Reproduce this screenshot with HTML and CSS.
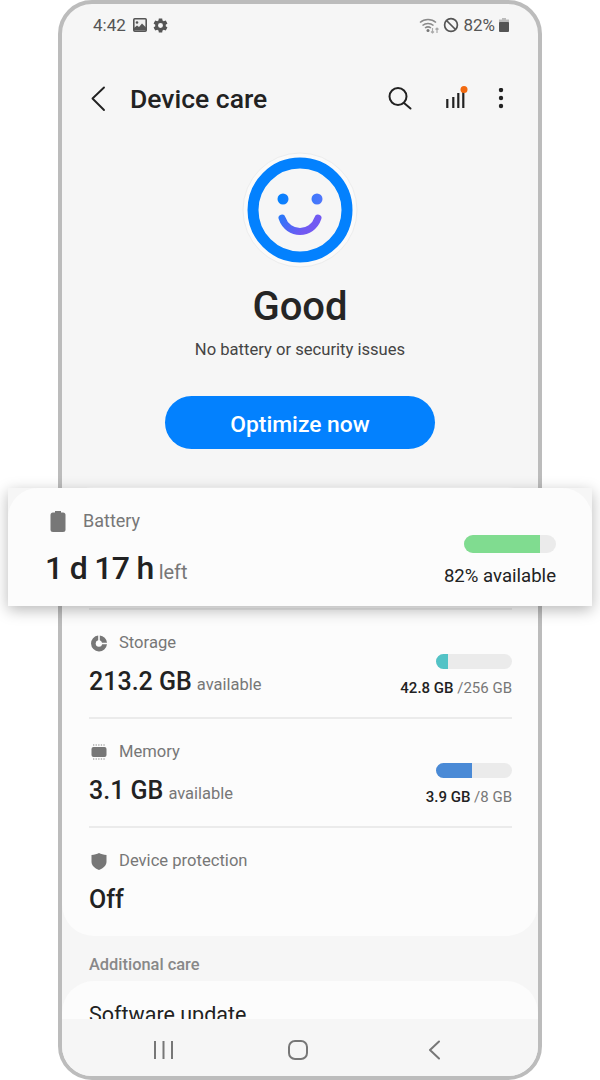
FILE: index.html
```html
<!DOCTYPE html>
<html lang="en">
<head>
  <meta charset="UTF-8">
  <meta name="viewport" content="width=device-width, initial-scale=1.0">
  <title>Device care</title>
  <link rel="stylesheet" href="styles.css">
</head>
<body>
  <div class="page">
    <div class="phone">
      <!-- Status bar -->
      <div class="status-bar">
        <div class="status-left">
          <span class="status-time">4:42</span>
          <svg width="14" height="14" viewBox="0 0 14 14"><rect x="0.800" y="0.800" width="12.400" height="12.400" rx="1" fill="#eee" stroke="#555" stroke-width="1.600"/><circle cx="4" cy="4.500" r="1.300" fill="#555"/><path fill="#555" d="M1 12.500V10l3-2.500 2 1.500 3-3.500 4 4v3z"/></svg>
          <svg width="17" height="17" viewBox="0 0 24 24"><path fill="#555" d="M19.400 13a7.600 7.600 0 0 0 0-2l2.400-1.900-2.400-4.200-2.900 1.200a7.500 7.500 0 0 0-1.700-1L14.400 2H9.600l-.4 3.100a7.500 7.500 0 0 0-1.700 1L4.600 4.900 2.200 9.100 4.600 11a7.600 7.600 0 0 0 0 2l-2.400 1.900 2.400 4.200 2.900-1.200a7.500 7.500 0 0 0 1.700 1l.4 3.100h4.800l.4-3.100a7.500 7.500 0 0 0 1.700-1l2.900 1.200 2.400-4.200zM12 15.500a3.500 3.500 0 1 1 0-7 3.500 3.500 0 0 1 0 7z"/></svg>
        </div>
        <div class="status-right">
          <svg width="21" height="18" viewBox="0 0 21 18"><g fill="none" stroke="#8a8a8a" stroke-width="1.500"><path d="M1 6.500a12 12 0 0 1 16 0"/><path d="M3.500 9.500a8.500 8.500 0 0 1 11 0"/><path d="M6 12a5 5 0 0 1 6 0"/></g><circle cx="9" cy="14.500" r="1.500" fill="#777"/><path stroke="#aaa" stroke-width="1.200" fill="none" d="M13.500 12v5M12 15.500l1.500 1.500 1.500-1.500M18 17v-5M16.500 13.500l1.500-1.500 1.500 1.500"/></svg>
          <svg width="16" height="16" viewBox="0 0 16 16"><g fill="none" stroke="#555" stroke-width="1.700"><circle cx="8" cy="8" r="6.400"/><path d="M3.500 3.500l9 9"/></g></svg>
          <span class="status-pct">82%</span>
          <svg width="10" height="14" viewBox="0 0 10 14"><path fill="#bbb" d="M3 0h4v2H3z"/><path fill="#bbb" d="M0 1.500h10V5H0z"/><rect y="4" x="0" width="10" height="10" rx="1" fill="#555"/></svg>
        </div>
      </div>

      <!-- App bar -->
      <div class="app-bar">
        <svg class="app-back" width="16" height="26" viewBox="0 0 16 26"><path fill="none" stroke="#222" stroke-width="1.900" stroke-linecap="round" stroke-linejoin="round" d="M14 1.500L2.500 12.500 14 24"/></svg>
        <h1 class="app-title">Device care</h1>
        <svg class="app-search" width="24" height="24" viewBox="0 0 24 24"><g fill="none" stroke="#222" stroke-width="2" stroke-linecap="round"><circle cx="10" cy="9.500" r="8.500"/><path d="M16 16l6.500 5.500"/></g></svg>
        <svg class="app-signal" width="23" height="26" viewBox="0 0 23 26"><g stroke="#222" stroke-width="2.200"><path d="M2.300 22v-9M8.300 22V11M13.300 22V7M18.300 22V6"/></g><circle cx="19" cy="3.500" r="3.500" fill="#f26a10"/></svg>
        <svg class="app-more" width="6" height="22" viewBox="0 0 6 22"><g fill="#222"><circle cx="3" cy="2" r="2.200"/><circle cx="3" cy="10" r="2.200"/><circle cx="3" cy="18" r="2.200"/></g></svg>
      </div>

      <!-- Scrolling content -->
      <div class="content">
        <div class="hero">
          <svg width="116" height="116" viewBox="0 0 116 116">
            <defs>
              <linearGradient id="smile" gradientUnits="userSpaceOnUse" x1="38" y1="48" x2="78" y2="86">
                <stop offset="0" stop-color="#0a84fc"/>
                <stop offset="0.7" stop-color="#7259f2"/>
              </linearGradient>
              <linearGradient id="eyes" gradientUnits="userSpaceOnUse" x1="36" y1="47" x2="80" y2="47">
                <stop offset="0" stop-color="#0381fe"/>
                <stop offset="1" stop-color="#4f76fb"/>
              </linearGradient>
            </defs>
            <circle cx="58" cy="58" r="57" fill="#fafafa" stroke="#ececec"/>
            <circle cx="58" cy="58" r="47" fill="#f6f6f6" stroke="#0381fe" stroke-width="11"/>
            <circle cx="41" cy="47" r="5.500" fill="url(#eyes)"/>
            <circle cx="75" cy="47" r="5.500" fill="url(#eyes)"/>
            <path fill="none" stroke="url(#smile)" stroke-width="7" stroke-linecap="round" d="M40 66c3 9 10.500 13.500 18 13.500S73 75 76 66"/>
          </svg>
          <div class="hero-title">Good</div>
          <div class="hero-sub">No battery or security issues</div>
          <button class="optimize-btn">Optimize now</button>
        </div>

        <div class="care-card">
          <!-- Storage -->
          <div class="care-row">
            <div class="care-left">
              <div class="care-label">
                <span class="care-icon"><svg width="17" height="17" viewBox="0 0 17 17"><path fill="#777" d="M7.200.5A8 8 0 1 0 16 9.300h-4.800a3.300 3.300 0 1 1-4-4z"/><path fill="#777" d="M8.800.5A8 8 0 0 1 16 7.700h-5a3.300 3.300 0 0 0-2.200-2.400z"/></svg></span>
                Storage
              </div>
              <div class="care-value">213.2 GB<small>available</small></div>
            </div>
            <div class="care-right">
              <div class="usage-bar"><div class="usage-fill usage-teal" style="width: 16%"></div></div>
              <div class="usage-text"><b>42.8 GB</b> /256 GB</div>
            </div>
          </div>
          <!-- Memory -->
          <div class="care-row">
            <div class="care-left">
              <div class="care-label">
                <span class="care-icon"><svg width="16" height="16" viewBox="0 0 16 16"><rect x="0.500" y="3" width="15" height="10" rx="2" fill="#777"/><path stroke="#888" stroke-dasharray="1.300 1.300" d="M2 1h12M2 15h12"/></svg></span>
                Memory
              </div>
              <div class="care-value">3.1 GB<small>available</small></div>
            </div>
            <div class="care-right">
              <div class="usage-bar"><div class="usage-fill usage-blue" style="width: 48%"></div></div>
              <div class="usage-text"><b>3.9 GB</b> /8 GB</div>
            </div>
          </div>
          <!-- Device protection -->
          <div class="care-row">
            <div class="care-left">
              <div class="care-label">
                <span class="care-icon"><svg width="16" height="17" viewBox="0 0 16 17"><path fill="#777" d="M8 0c2 1.200 4.500 1.800 7.500 2v6.500c0 3.800-3 6.800-7.500 8.500C3.500 15.300.5 12.300.5 8.500V2C3.500 1.800 6 1.200 8 0z"/></svg></span>
                Device protection
              </div>
              <div class="care-value">Off</div>
            </div>
          </div>
        </div>

        <div class="section-title">Additional care</div>
        <div class="care-card care-card-next">
          <div class="next-item">Software update</div>
        </div>
      </div>

      <!-- Navigation bar -->
      <div class="nav-bar">
        <svg width="20" height="20" viewBox="0 0 20 20"><path stroke="#777" stroke-width="2" d="M2 1v18M10.500 1v18M19 1v18"/></svg>
        <svg class="nav-home" width="20" height="20" viewBox="0 0 20 20"><rect x="1" y="1" width="18" height="18" rx="6" fill="none" stroke="#777" stroke-width="2"/></svg>
        <svg class="nav-back" width="12" height="20" viewBox="0 0 12 20"><path fill="none" stroke="#777" stroke-width="2" stroke-linecap="round" stroke-linejoin="round" d="M11 1.500L2 10l9 8.500"/></svg>
      </div>
    </div>

    <!-- Enlarged battery card, lies over the phone -->
    <div class="battery-pop">
      <div class="battery-inner">
        <div class="care-left">
          <div class="care-label battery-label">
            <span class="care-icon battery-icon"><svg width="16" height="21" viewBox="0 0 16 21"><path fill="#777" d="M5 0h6v2H5z"/><rect x="0.500" y="1.500" width="15" height="19.500" rx="2.500" fill="#777"/></svg></span>
            Battery
          </div>
          <div class="care-value battery-value">1 d 17 h<small>left</small></div>
        </div>
        <div class="care-right battery-right">
          <div class="usage-bar battery-bar"><div class="usage-fill usage-green" style="width: 83%"></div></div>
          <div class="usage-text battery-text">82% available</div>
        </div>
      </div>
    </div>
  </div>
</body>
</html>
```

FILE: styles.css
```css
body {
  margin: 0;
  background: #fff;
  font-family: Roboto, "Liberation Sans", sans-serif;
  color: #222;
}

.page {
  position: relative;
  width: 600px;
  height: 1080px;
  overflow: hidden;
}

.phone {
  box-sizing: border-box;
  width: 484px;
  height: 1080px;
  margin: 0 58px;
  border: 4px solid #bcbcbc;
  border-radius: 34px;
  background: #f6f6f6;
  display: flex;
  flex-direction: column;
  overflow: hidden;
}

/* Status bar */
.status-bar {
  flex: none;
  height: 42px;
  padding: 0 29px 0 31px;
  display: flex;
  justify-content: space-between;
  align-items: center;
  color: #555;
  font-size: 17px;
}

.status-left,
.status-right {
  display: flex;
  align-items: center;
}

.status-time {
  margin-right: 7px;
}

.status-left svg + svg {
  margin-left: 5px;
}

.status-right svg + svg {
  margin-left: 3px;
}

.status-pct {
  margin: 0 4px 0 4px;
}

/* App bar */
.app-bar {
  flex: none;
  height: 58px;
  margin-top: 24px;
  padding: 0 34px 0 28px;
  display: flex;
  align-items: center;
}

.app-title {
  flex: 1;
  margin: 0 0 2px 24px;
  font-size: 26.500px;
  font-weight: 500;
  color: #222;
}

.app-search {
  margin-right: 33px;
}

.app-signal {
  margin-right: 30px;
}

/* Content */
.content {
  flex: 1;
  min-height: 0;
  overflow: hidden;
}

.hero {
  margin-top: 24px;
  display: flex;
  flex-direction: column;
  align-items: center;
}

.hero-title {
  margin-top: 17px;
  font-size: 40px;
  line-height: 44px;
  font-weight: 500;
  color: #252525;
}

.hero-sub {
  margin-top: 11px;
  font-size: 16.600px;
  line-height: 20px;
  color: #444;
}

.optimize-btn {
  width: 270px;
  height: 53px;
  margin-top: 36px;
  padding: 3px 0 0;
  border: none;
  border-radius: 27px;
  background: #0381fe;
  color: #fff;
  font-family: inherit;
  font-size: 22.800px;
  font-weight: 500;
}

/* Cards */
.care-card {
  margin-top: 38px;
  padding: 121px 26px 1px 27px;
  border-radius: 32px;
  background: #fcfcfc;
}

.care-row {
  box-sizing: border-box;
  height: 109px;
  padding-top: 23px;
  border-top: 2px solid #ebebeb;
  display: flex;
  justify-content: space-between;
  align-items: flex-start;
}

.care-label {
  display: flex;
  align-items: center;
  font-size: 16.600px;
  line-height: 20px;
  color: #777;
}

.care-icon {
  width: 20px;
  margin-right: 10px;
  display: flex;
  justify-content: center;
}

.care-value {
  margin-top: 13px;
  font-size: 25px;
  line-height: 32px;
  font-weight: 500;
  color: #222;
}

.care-value small {
  margin-left: 5px;
  font-size: 16.500px;
  font-weight: 400;
  color: #777;
}

.care-right {
  margin-top: 21px;
  display: flex;
  flex-direction: column;
  align-items: flex-end;
}

.usage-bar {
  width: 76px;
  height: 15px;
  border-radius: 8px;
  background: #ebebeb;
  overflow: hidden;
}

.usage-fill {
  height: 100%;
}

.usage-teal {
  background: #53c3c6;
}

.usage-blue {
  background: #4a8ad6;
}

.usage-green {
  background: #80dc90;
}

.usage-text {
  margin-top: 10px;
  font-size: 15px;
  line-height: 18px;
  color: #777;
}

.usage-text b {
  font-size: 15px;
  font-weight: 500;
  color: #222;
}

.section-title {
  margin: 19px 0 0 27px;
  font-size: 16.400px;
  line-height: 20px;
  font-weight: 500;
  color: #888;
}

.care-card-next {
  margin-top: 6px;
  height: 60px;
  padding-top: 22px;
}

.next-item {
  font-size: 21.500px;
  line-height: 24px;
  color: #222;
}

/* Navigation bar */
.nav-bar {
  flex: none;
  height: 53px;
  padding: 4px 0 0 91px;
  display: flex;
  align-items: center;
  background: #f6f6f6;
}

.nav-home {
  margin-left: 115px;
}

.nav-back {
  margin-left: 120px;
}

/* Enlarged battery card */
.battery-pop {
  position: absolute;
  left: 8px;
  top: 488px;
  width: 584px;
  height: 118px;
  background: #f6f6f6;
  box-shadow: 0 4px 14px rgba(0, 0, 0, 0.28);
}

.battery-inner {
  box-sizing: border-box;
  height: 100%;
  padding: 22px 36px 0 37px;
  border-radius: 30px 30px 0 0;
  background: #fcfcfc;
  display: flex;
  justify-content: space-between;
  align-items: flex-start;
}

.battery-label {
  font-size: 18px;
  line-height: 22px;
}

.battery-icon {
  width: 26px;
  margin-right: 12px;
}

.battery-value {
  margin-top: 18px;
  font-size: 32px;
  line-height: 36px;
  letter-spacing: -0.700px;
}

.battery-value small {
  font-size: 20px;
  letter-spacing: 0;
}

.battery-right {
  margin-top: 25px;
}

.battery-bar {
  width: 92px;
  height: 18px;
  border-radius: 9px;
}

.battery-text {
  margin-top: 13px;
  font-size: 18.600px;
  line-height: 20px;
  font-weight: 400;
  color: #222;
}
```
